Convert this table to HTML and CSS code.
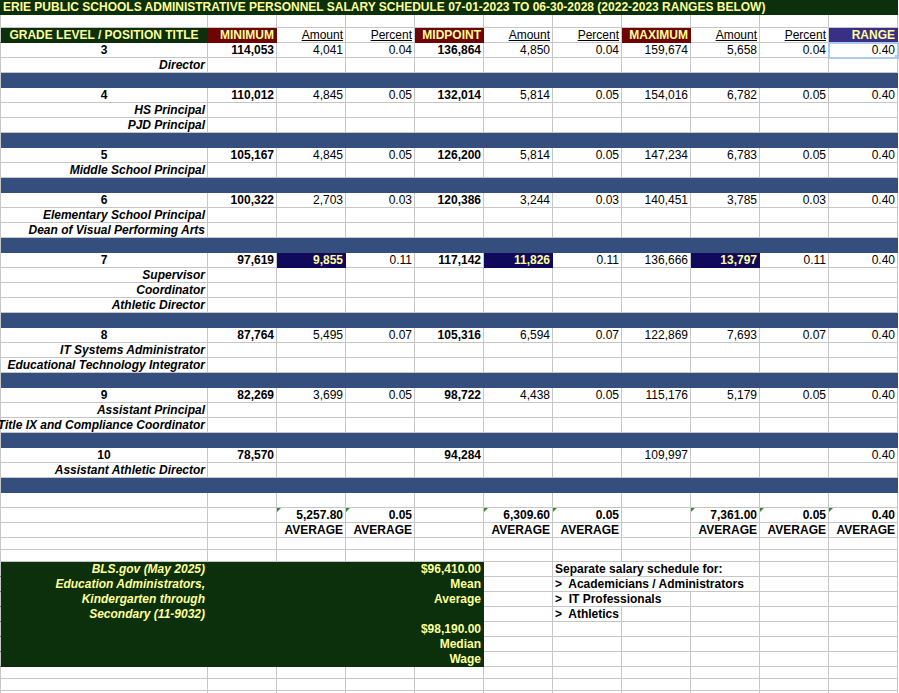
FILE: index.html
```html
<!DOCTYPE html>
<html lang="en">
<head>
<meta charset="utf-8">
<title>Erie Public Schools Administrative Personnel Salary Schedule</title>
<link rel="stylesheet" href="styles.css">
</head>
<body>
<div class="sheet">
  <div class="title">ERIE PUBLIC SCHOOLS ADMINISTRATIVE PERSONNEL SALARY SCHEDULE 07-01-2023 TO 06-30-2028 (2022-2023 RANGES BELOW)</div>
  <div class="row t"><div class="c"></div><div class="c"></div><div class="c"></div><div class="c"></div><div class="c"></div><div class="c"></div><div class="c"></div><div class="c"></div><div class="c"></div><div class="c"></div><div class="c"></div></div>
  <div class="row"><div class="c ctr hd dg">GRADE LEVEL / POSITION TITLE</div><div class="c hd mr">MINIMUM</div><div class="c u">Amount</div><div class="c u">Percent</div><div class="c hd mr">MIDPOINT</div><div class="c u">Amount</div><div class="c u">Percent</div><div class="c hd mr">MAXIMUM</div><div class="c u">Amount</div><div class="c u">Percent</div><div class="c hd pu">RANGE</div></div>

  <div class="row"><div class="c ctr b">3</div><div class="c b">114,053</div><div class="c">4,041</div><div class="c">0.04</div><div class="c b">136,864</div><div class="c">4,850</div><div class="c">0.04</div><div class="c">159,674</div><div class="c">5,658</div><div class="c">0.04</div><div class="c sel">0.40</div></div>
  <div class="row"><div class="c b i">Director</div><div class="c"></div><div class="c"></div><div class="c"></div><div class="c"></div><div class="c"></div><div class="c"></div><div class="c"></div><div class="c"></div><div class="c"></div><div class="c"></div></div>
  <div class="band"></div>

  <div class="row"><div class="c ctr b">4</div><div class="c b">110,012</div><div class="c">4,845</div><div class="c">0.05</div><div class="c b">132,014</div><div class="c">5,814</div><div class="c">0.05</div><div class="c">154,016</div><div class="c">6,782</div><div class="c">0.05</div><div class="c">0.40</div></div>
  <div class="row"><div class="c b i">HS Principal</div><div class="c"></div><div class="c"></div><div class="c"></div><div class="c"></div><div class="c"></div><div class="c"></div><div class="c"></div><div class="c"></div><div class="c"></div><div class="c"></div></div>
  <div class="row"><div class="c b i">PJD Principal</div><div class="c"></div><div class="c"></div><div class="c"></div><div class="c"></div><div class="c"></div><div class="c"></div><div class="c"></div><div class="c"></div><div class="c"></div><div class="c"></div></div>
  <div class="band"></div>

  <div class="row"><div class="c ctr b">5</div><div class="c b">105,167</div><div class="c">4,845</div><div class="c">0.05</div><div class="c b">126,200</div><div class="c">5,814</div><div class="c">0.05</div><div class="c">147,234</div><div class="c">6,783</div><div class="c">0.05</div><div class="c">0.40</div></div>
  <div class="row"><div class="c b i">Middle School Principal</div><div class="c"></div><div class="c"></div><div class="c"></div><div class="c"></div><div class="c"></div><div class="c"></div><div class="c"></div><div class="c"></div><div class="c"></div><div class="c"></div></div>
  <div class="band"></div>

  <div class="row"><div class="c ctr b">6</div><div class="c b">100,322</div><div class="c">2,703</div><div class="c">0.03</div><div class="c b">120,386</div><div class="c">3,244</div><div class="c">0.03</div><div class="c">140,451</div><div class="c">3,785</div><div class="c">0.03</div><div class="c">0.40</div></div>
  <div class="row"><div class="c b i">Elementary School Principal</div><div class="c"></div><div class="c"></div><div class="c"></div><div class="c"></div><div class="c"></div><div class="c"></div><div class="c"></div><div class="c"></div><div class="c"></div><div class="c"></div></div>
  <div class="row"><div class="c b i">Dean of Visual Performing Arts</div><div class="c"></div><div class="c"></div><div class="c"></div><div class="c"></div><div class="c"></div><div class="c"></div><div class="c"></div><div class="c"></div><div class="c"></div><div class="c"></div></div>
  <div class="band"></div>

  <div class="row"><div class="c ctr b">7</div><div class="c b">97,619</div><div class="c hi">9,855</div><div class="c">0.11</div><div class="c b">117,142</div><div class="c hi">11,826</div><div class="c">0.11</div><div class="c">136,666</div><div class="c hi">13,797</div><div class="c">0.11</div><div class="c">0.40</div></div>
  <div class="row"><div class="c b i">Supervisor</div><div class="c"></div><div class="c"></div><div class="c"></div><div class="c"></div><div class="c"></div><div class="c"></div><div class="c"></div><div class="c"></div><div class="c"></div><div class="c"></div></div>
  <div class="row"><div class="c b i">Coordinator</div><div class="c"></div><div class="c"></div><div class="c"></div><div class="c"></div><div class="c"></div><div class="c"></div><div class="c"></div><div class="c"></div><div class="c"></div><div class="c"></div></div>
  <div class="row"><div class="c b i">Athletic Director</div><div class="c"></div><div class="c"></div><div class="c"></div><div class="c"></div><div class="c"></div><div class="c"></div><div class="c"></div><div class="c"></div><div class="c"></div><div class="c"></div></div>
  <div class="band"></div>

  <div class="row"><div class="c ctr b">8</div><div class="c b">87,764</div><div class="c">5,495</div><div class="c">0.07</div><div class="c b">105,316</div><div class="c">6,594</div><div class="c">0.07</div><div class="c">122,869</div><div class="c">7,693</div><div class="c">0.07</div><div class="c">0.40</div></div>
  <div class="row"><div class="c b i">IT Systems Administrator</div><div class="c"></div><div class="c"></div><div class="c"></div><div class="c"></div><div class="c"></div><div class="c"></div><div class="c"></div><div class="c"></div><div class="c"></div><div class="c"></div></div>
  <div class="row"><div class="c b i">Educational Technology Integrator</div><div class="c"></div><div class="c"></div><div class="c"></div><div class="c"></div><div class="c"></div><div class="c"></div><div class="c"></div><div class="c"></div><div class="c"></div><div class="c"></div></div>
  <div class="band"></div>

  <div class="row"><div class="c ctr b">9</div><div class="c b">82,269</div><div class="c">3,699</div><div class="c">0.05</div><div class="c b">98,722</div><div class="c">4,438</div><div class="c">0.05</div><div class="c">115,176</div><div class="c">5,179</div><div class="c">0.05</div><div class="c">0.40</div></div>
  <div class="row"><div class="c b i">Assistant Principal</div><div class="c"></div><div class="c"></div><div class="c"></div><div class="c"></div><div class="c"></div><div class="c"></div><div class="c"></div><div class="c"></div><div class="c"></div><div class="c"></div></div>
  <div class="row"><div class="c b i">Title IX and Compliance Coordinator</div><div class="c"></div><div class="c"></div><div class="c"></div><div class="c"></div><div class="c"></div><div class="c"></div><div class="c"></div><div class="c"></div><div class="c"></div><div class="c"></div></div>
  <div class="band"></div>

  <div class="row"><div class="c ctr b">10</div><div class="c b">78,570</div><div class="c"></div><div class="c"></div><div class="c b">94,284</div><div class="c"></div><div class="c"></div><div class="c">109,997</div><div class="c"></div><div class="c"></div><div class="c">0.40</div></div>
  <div class="row"><div class="c b i">Assistant Athletic Director</div><div class="c"></div><div class="c"></div><div class="c"></div><div class="c"></div><div class="c"></div><div class="c"></div><div class="c"></div><div class="c"></div><div class="c"></div><div class="c"></div></div>
  <div class="band"></div>

  <div class="row"><div class="c"></div><div class="c"></div><div class="c"></div><div class="c"></div><div class="c"></div><div class="c"></div><div class="c"></div><div class="c"></div><div class="c"></div><div class="c"></div><div class="c"></div></div>
  <div class="row"><div class="c"></div><div class="c"></div><div class="c b tri">5,257.80</div><div class="c b tri">0.05</div><div class="c"></div><div class="c b tri">6,309.60</div><div class="c b tri">0.05</div><div class="c"></div><div class="c b tri">7,361.00</div><div class="c b tri">0.05</div><div class="c b tri">0.40</div></div>
  <div class="row"><div class="c"></div><div class="c"></div><div class="c b">AVERAGE</div><div class="c b">AVERAGE</div><div class="c"></div><div class="c b">AVERAGE</div><div class="c b">AVERAGE</div><div class="c"></div><div class="c b">AVERAGE</div><div class="c b">AVERAGE</div><div class="c b">AVERAGE</div></div>
  <div class="row s"><div class="c"></div><div class="c"></div><div class="c"></div><div class="c"></div><div class="c"></div><div class="c"></div><div class="c"></div><div class="c"></div><div class="c"></div><div class="c"></div><div class="c"></div></div>
  <div class="row s"><div class="c"></div><div class="c"></div><div class="c"></div><div class="c"></div><div class="c"></div><div class="c"></div><div class="c"></div><div class="c"></div><div class="c"></div><div class="c"></div><div class="c"></div></div>

  <div class="row"><div class="c g i">BLS.gov (May 2025)</div><div class="c g"></div><div class="c g"></div><div class="c g"></div><div class="c g">$96,410.00</div><div class="c"></div><div class="c b l sp3">Separate salary schedule for:</div><div class="c"></div><div class="c"></div></div>
  <div class="row"><div class="c g i">Education Administrators,</div><div class="c g"></div><div class="c g"></div><div class="c g"></div><div class="c g">Mean</div><div class="c"></div><div class="c b l sp3">&gt;&nbsp; Academicians / Administrators</div><div class="c"></div><div class="c"></div></div>
  <div class="row"><div class="c g i">Kindergarten through</div><div class="c g"></div><div class="c g"></div><div class="c g"></div><div class="c g">Average</div><div class="c"></div><div class="c b l sp2">&gt;&nbsp; IT Professionals</div><div class="c"></div><div class="c"></div><div class="c"></div></div>
  <div class="row"><div class="c g i">Secondary (11-9032)</div><div class="c g"></div><div class="c g"></div><div class="c g"></div><div class="c g"></div><div class="c"></div><div class="c b l">&gt;&nbsp; Athletics</div><div class="c"></div><div class="c"></div><div class="c"></div><div class="c"></div></div>
  <div class="row"><div class="c g"></div><div class="c g"></div><div class="c g"></div><div class="c g"></div><div class="c g">$98,190.00</div><div class="c"></div><div class="c"></div><div class="c"></div><div class="c"></div><div class="c"></div><div class="c"></div></div>
  <div class="row"><div class="c g"></div><div class="c g"></div><div class="c g"></div><div class="c g"></div><div class="c g">Median</div><div class="c"></div><div class="c"></div><div class="c"></div><div class="c"></div><div class="c"></div><div class="c"></div></div>
  <div class="row"><div class="c g"></div><div class="c g"></div><div class="c g"></div><div class="c g"></div><div class="c g">Wage</div><div class="c"></div><div class="c"></div><div class="c"></div><div class="c"></div><div class="c"></div><div class="c"></div></div>

  <div class="row s"><div class="c"></div><div class="c"></div><div class="c"></div><div class="c"></div><div class="c"></div><div class="c"></div><div class="c"></div><div class="c"></div><div class="c"></div><div class="c"></div><div class="c"></div></div>
  <div class="row s"><div class="c"></div><div class="c"></div><div class="c"></div><div class="c"></div><div class="c"></div><div class="c"></div><div class="c"></div><div class="c"></div><div class="c"></div><div class="c"></div><div class="c"></div></div>
  <div class="row s"><div class="c"></div><div class="c"></div><div class="c"></div><div class="c"></div><div class="c"></div><div class="c"></div><div class="c"></div><div class="c"></div><div class="c"></div><div class="c"></div><div class="c"></div></div>
</div>
</body>
</html>
```
FILE: styles.css
```css
* {
  box-sizing: border-box;
}

html,
body {
  overflow: hidden;
}

body {
  margin: 0;
  background: #ffffff;
  color: #000000;
  font-family: "Liberation Sans", Arial, sans-serif;
  font-size: 12px;
}

.sheet {
  width: 899px;
}

.title {
  width: 898px;
  height: 15px;
  padding-left: 3px;
  background: #0b300b;
  color: #ffff99;
  font-weight: bold;
  line-height: 15px;
  white-space: nowrap;
  overflow: hidden;
}

.row {
  display: grid;
  grid-template-columns: 208px repeat(10, 69px);
  height: 15px;
}

.row.t {
  height: 13px;
}

.row.s {
  height: 12px;
}

.c {
  position: relative;
  display: flex;
  align-items: center;
  justify-content: flex-end;
  padding: 0 2px;
  border-right: 1px solid #c6c6c6;
  border-bottom: 1px solid #c6c6c6;
  line-height: 14px;
  white-space: nowrap;
}

.c:first-child {
  border-left: 1px solid #c6c6c6;
}

.band {
  width: 898px;
  height: 15px;
  background: #344f7d;
  border-left: 1px solid #c6c6c6;
}

.b {
  font-weight: bold;
}

.i {
  font-style: italic;
}

.u {
  text-decoration: underline;
}

.ctr {
  justify-content: center;
}

.l {
  justify-content: flex-start;
}

.sp2 {
  grid-column: span 2;
}

.sp3 {
  grid-column: span 3;
}

.hd {
  color: #ffff99;
  font-weight: bold;
}

.dg {
  background: #0b300b;
  border-color: #0b300b;
}

.mr {
  background: #6e0404;
  border-color: #6e0404;
}

.pu {
  background: #3a2f86;
  border-color: #3a2f86;
}

.hi {
  background: #110a5c;
  border-color: #110a5c;
  color: #ffff99;
  font-weight: bold;
}

.g {
  background: #0b300b;
  border-color: #0b300b;
  color: #ffff99;
  font-weight: bold;
}

.tri::before {
  content: "";
  position: absolute;
  left: 0;
  top: 0;
  border-top: 4px solid #2f8a2f;
  border-right: 4px solid transparent;
}

.sel {
  z-index: 1;
  outline: 2px solid #afc8ee;
  outline-offset: -1px;
}

.sel::after {
  content: "";
  position: absolute;
  right: -2px;
  bottom: -2px;
  width: 4px;
  height: 4px;
  background: #afc8ee;
}
```
